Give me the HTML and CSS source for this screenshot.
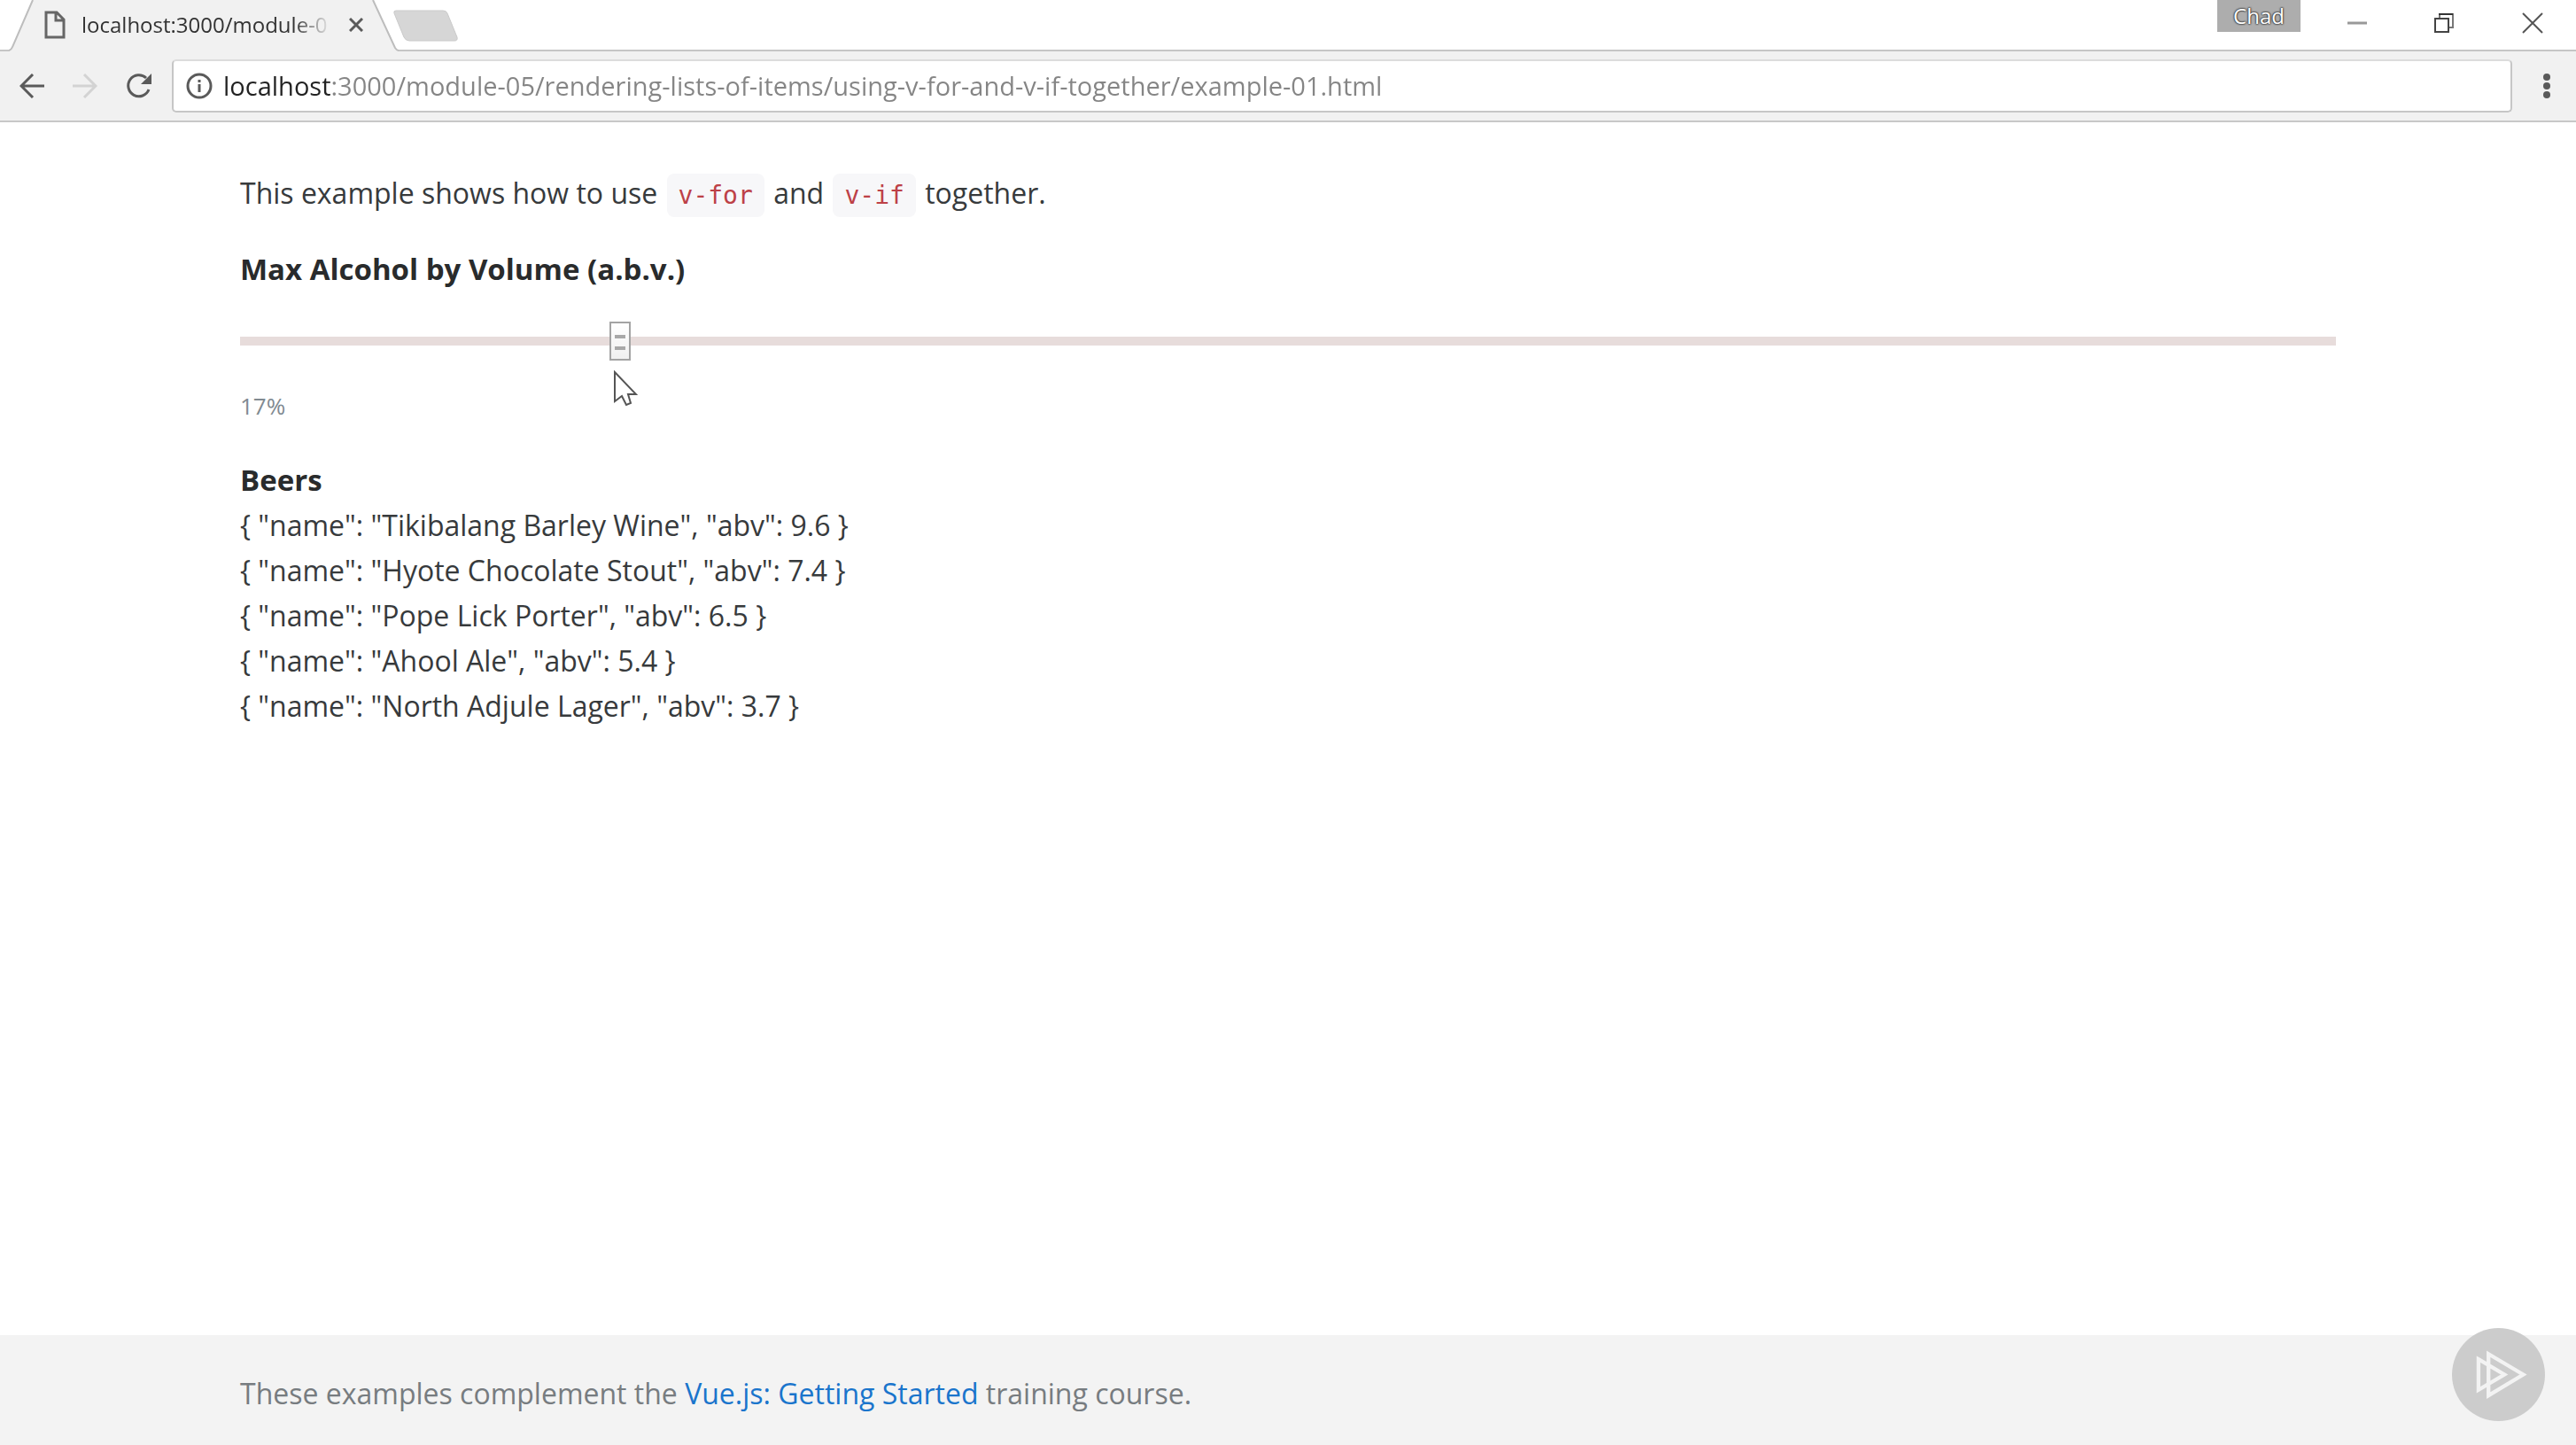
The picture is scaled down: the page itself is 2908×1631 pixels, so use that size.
FILE: index.html
```html
<!DOCTYPE html>
<html lang="en">
<head>
<meta charset="utf-8">
<title>localhost:3000/module-05</title>
<link rel="stylesheet" href="styles.css">
</head>
<body>
<header class="browser">
  <div class="tab-strip">
    <div class="tab">
      <svg class="tab-shape" viewBox="0 0 440 58" aria-hidden="true"><path d="M0 58L1 57Q3 56 4 53L27 0H411L436 54Q438 57 440 58Z" fill="#f1f1f1"/><path d="M0 57Q3 56 4 53L27 0M411 0L436 54Q438 57 440 57" fill="none" stroke="#bdbdbd" stroke-width="2"/></svg>
      <svg class="file-icon" width="24" height="32" viewBox="0 0 24 32" aria-hidden="true"><path d="M2 2H14L22 10V30H2ZM13 2V11H22" fill="none" stroke="#666" stroke-width="3"/></svg>
      <span class="tab-title">localhost:3000/module-0</span>
      <button class="tab-close" aria-label="Close tab"><svg width="16" height="16" viewBox="0 0 16 16"><path d="M1 1L15 15M15 1L1 15" stroke="#5a5a5a" stroke-width="3"/></svg></button>
    </div>
    <button class="new-tab" aria-label="New tab"><svg width="73" height="36" viewBox="0 0 73 36"><path d="M3 1H56Q60 1 61 4L72 31Q73 35 69 35H18Q14 35 12 31L1 4Q0 1 3 1Z" fill="#d6d6d6" stroke="#cacaca"/></svg></button>
    <div class="window-controls">
      <button class="profile">Chad</button>
      <button class="control minimize" aria-label="Minimize"><svg width="24" height="24" viewBox="0 0 24 24"><path d="M1 12H23" stroke="#999" stroke-width="3"/></svg></button>
      <button class="control restore" aria-label="Restore"><svg width="24" height="24" viewBox="0 0 24 24"><path d="M7 6V2H22V17H18" fill="none" stroke="#777" stroke-width="2"/><path d="M6 2H22" stroke="#333" stroke-width="2"/><path d="M2 7H17V22H2Z" fill="#fff" stroke="#444" stroke-width="2"/></svg></button>
      <button class="control" aria-label="Close"><svg width="24" height="24" viewBox="0 0 24 24"><path d="M1 1L23 23M23 1L1 23" stroke="#555" stroke-width="2"/></svg></button>
    </div>
  </div>
  <div class="toolbar">
    <div class="nav">
      <button aria-label="Back"><svg width="28" height="28" viewBox="0 0 28 28"><path d="M28 14H3M15 1L2 14L15 27" fill="none" stroke="#5a5a5a" stroke-width="3"/></svg></button>
      <button aria-label="Forward" disabled><svg width="28" height="28" viewBox="0 0 28 28"><path d="M0 14H25M13 1L26 14L13 27" fill="none" stroke="#d3d3d3" stroke-width="3"/></svg></button>
      <button aria-label="Reload"><svg width="30" height="30" viewBox="0 0 30 30"><path d="M26 19A12 12 0 1 1 23 6" fill="none" stroke="#5a5a5a" stroke-width="3"/><path d="M29 1V13H17Z" fill="#5a5a5a"/></svg></button>
    </div>
    <div class="address">
      <svg width="30" height="30" viewBox="0 0 30 30" aria-hidden="true"><circle cx="15" cy="15" r="13" fill="none" stroke="#5a5a5a" stroke-width="3"/><path d="M15 13V22M15 8V11" stroke="#5a5a5a" stroke-width="3"/></svg>
      <input class="url" type="text" aria-label="Address" value="localhost:3000/module-05/rendering-lists-of-items/using-v-for-and-v-if-together/example-01.html">
    </div>
    <button class="menu" aria-label="Menu"><svg width="8" height="28" viewBox="0 0 8 28"><g fill="#5a5a5a"><circle cx="4" cy="4" r="4"/><circle cx="4" cy="14" r="4"/><circle cx="4" cy="24" r="4"/></g></svg></button>
  </div>
</header>

<main class="content">
  <div class="container">
    <p class="intro">This example shows how to use <code>v-for</code> and <code>v-if</code> together.</p>
    <label class="heading" for="abv">Max Alcohol by Volume (a.b.v.)</label>
    <div class="slider">
      <input id="abv" class="range" type="range" min="0" max="100" step="0.1" value="17.8">
      <svg class="pointer" width="28" height="42" viewBox="0 0 28 42" aria-hidden="true"><path d="M2 2V35L10 29L15 39L20 37L17 27H26Z" fill="#fff" stroke="#555" stroke-width="2"/></svg>
    </div>
    <output class="value" for="abv">17%</output>
    <h2 class="heading">Beers</h2>
    <ul class="beers">
      <li>{ "name": "Tikibalang Barley Wine", "abv": 9.6 }</li>
      <li>{ "name": "Hyote Chocolate Stout", "abv": 7.4 }</li>
      <li>{ "name": "Pope Lick Porter", "abv": 6.5 }</li>
      <li>{ "name": "Ahool Ale", "abv": 5.4 }</li>
      <li>{ "name": "North Adjule Lager", "abv": 3.7 }</li>
    </ul>
  </div>
</main>

<footer class="footer">
  <div class="container">These examples complement the <a href="#">Vue.js: Getting Started</a> training course.</div>
</footer>
<svg class="badge" viewBox="0 0 316 316" aria-hidden="true"><circle cx="158" cy="158" r="158" fill="#ccc"/><path d="M124 88L242 158L124 229ZM90 106L178 158L90 210Z" fill="none" stroke="#f3f3f3" stroke-width="13"/></svg>
</body>
</html>
```
FILE: styles.css
```css
* {
  box-sizing: border-box;
}

body {
  display: flex;
  flex-direction: column;
  min-height: 100vh;
  margin: 0;
  background: #fff;
  color: #373a3c;
  font: 32px/51px "Open Sans", "Noto Sans", sans-serif;
}

button {
  display: flex;
  align-items: center;
  justify-content: center;
  padding: 0;
  border: 0;
  background: none;
  font: inherit;
}

svg {
  display: block;
  flex: none;
}

/* Browser window */
.tab-strip {
  display: flex;
  height: 58px;
  padding-left: 10px;
  border-bottom: 2px solid #c6c6c6;
}

.tab {
  position: relative;
  display: flex;
  align-items: center;
  width: 440px;
  height: 56px;
  padding-left: 40px;
}

.tab-shape {
  position: absolute;
  top: 0;
  left: 0;
  width: 440px;
  height: 58px;
}

.file-icon,
.tab-title,
.tab-close {
  position: relative;
}

.tab-title {
  width: 282px;
  margin: 0 20px 0 18px;
  color: #333;
  font-size: 24px;
  line-height: 36px;
  white-space: nowrap;
  mask-image: linear-gradient(to right, #000 240px, transparent);
}

.new-tab {
  width: 73px;
  height: 58px;
  margin-left: -6px;
}

.window-controls {
  display: flex;
  margin-left: auto;
  padding-right: 37px;
}

.profile {
  width: 94px;
  height: 36px;
  margin-right: 52px;
  background: #adadad;
  color: #fff;
  font-size: 24px;
  line-height: 32px;
  text-shadow: 0 0 2px #333, 0 0 2px #333, 0 0 2px #333;
}

.control {
  width: 24px;
  height: 52px;
}

.minimize {
  margin-right: 74px;
}

.restore {
  margin-right: 76px;
}

.toolbar {
  display: flex;
  align-items: center;
  height: 80px;
  padding: 9px 28px 9px 22px;
  border-bottom: 2px solid #c8c8c8;
  background: #f1f1f1;
}

.nav {
  display: flex;
  align-items: center;
  gap: 32px;
}

.address {
  display: flex;
  flex: 1;
  align-items: center;
  gap: 12px;
  height: 60px;
  margin: 0 34px 0 22px;
  padding: 0 14px;
  border: 2px solid #c6c6c6;
  border-top-color: #dcdcdc;
  border-radius: 5px;
  background: #fff;
}

/* The host part of the address is darker than the path */
.url {
  flex: 1;
  min-width: 0;
  padding: 0;
  border: 0;
  outline: 0;
  background: linear-gradient(to right, #222 122px, #858585 122px);
  background-clip: text;
  color: transparent;
  font: 29px/40px "Open Sans", "Noto Sans", sans-serif;
}

.menu {
  width: 10px;
}

/* Page */
.container {
  width: calc(100% - 60px);
  max-width: 2366px;
  margin: 0 auto;
}

.content {
  flex: 1;
  padding: 54px 0;
}

.intro {
  margin: 0 0 35px;
}

code {
  margin: 0 2px;
  padding: 8px 13px;
  border-radius: 8px;
  background: #f7f7f9;
  color: #bd4147;
  font: 28px "DejaVu Sans Mono", monospace;
}

.heading {
  display: block;
  margin: 0;
  color: #292b2c;
  font-size: 33px;
  font-weight: 700;
  line-height: 51px;
}

.slider {
  position: relative;
  margin: 34px 0 31px;
}

.range {
  display: block;
  width: 100%;
  height: 44px;
  margin: 0;
  appearance: none;
  background: linear-gradient(#e7dcdb, #e7dcdb) center / 100% 10px no-repeat;
}

.range::-webkit-slider-thumb {
  width: 24px;
  height: 44px;
  appearance: none;
  border: 2px solid #a3a3a3;
  background:
    linear-gradient(#a8a8a8, #a8a8a8) 50% 13px / 12px 4px no-repeat,
    linear-gradient(#a8a8a8, #a8a8a8) 50% 26px / 12px 4px no-repeat,
    linear-gradient(#fff, #f0f0f0);
}

.pointer {
  position: absolute;
  top: 55px;
  left: 421px;
}

.value {
  display: block;
  margin-bottom: 38px;
  color: #818a91;
  font-size: 26px;
  line-height: 40px;
}

.beers {
  margin: 0;
  padding: 0;
  list-style: none;
}

.footer {
  padding: 40px 0 33px;
  background: #f3f3f3;
  color: #777c80;
}

.footer a {
  color: #1a75cc;
  text-decoration: none;
}

.badge {
  position: fixed;
  right: 35px;
  bottom: 27px;
  width: 105px;
  height: 105px;
}
```
